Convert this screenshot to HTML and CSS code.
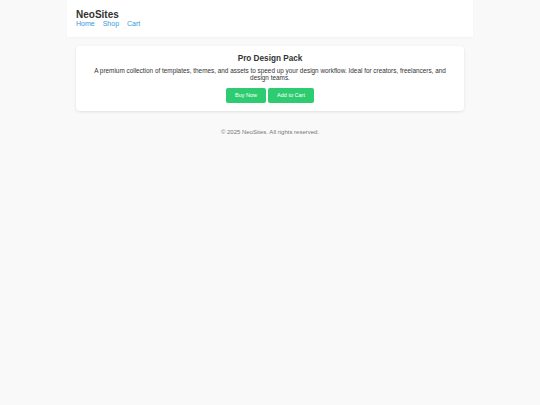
FILE: index.html
```html
<!DOCTYPE html>
<html>
<head>
<meta charset="utf-8">
<link rel="stylesheet" href="styles.css">
</head>
<body>
<div class="page">
  <header class="site-header">
    <div class="brand">NeoSites</div>
    <nav class="nav">
      <a href="#">Home</a>
      <a href="#">Shop</a>
      <a href="#">Cart</a>
    </nav>
  </header>
  <main class="main">
    <section class="card">
      <h2 class="card-title">Pro Design Pack</h2>
      <p class="card-text">A premium collection of templates, themes, and assets to speed up your design workflow. Ideal for creators, freelancers, and design teams.</p>
      <div class="actions">
        <button class="btn">Buy Now</button>
        <button class="btn">Add to Cart</button>
      </div>
    </section>
  </main>
  <footer class="footer">© 2025 NeoSites. All rights reserved.</footer>
</div>
</body>
</html>
```
FILE: styles.css
```css
html, body {
  margin: 0;
  padding: 0;
  background: #f9f9f9;
  font-family: "Liberation Sans", Arial, sans-serif;
  color: #333;
}
.page {
  max-width: 406px;
  margin: 0 auto;
}
.site-header {
  background: #fff;
  padding: 9px 9px 9.5px;
  box-shadow: 0 1px 2px rgba(0,0,0,0.03);
}
.brand {
  font-size: 10px;
  font-weight: bold;
  color: #333;
}
.nav {
  display: flex;
  gap: 8px;
  font-size: 7px;
}
.nav a {
  color: #3498db;
  text-decoration: none;
}
.main {
  padding: 9px;
}
.card {
  background: #fff;
  border-radius: 4px;
  box-shadow: 0 1px 3px rgba(0,0,0,0.1);
  padding: 8px 9px 8px;
  text-align: center;
}
.card-title {
  margin: 0 0 4.3px;
  font-size: 8.2px;
  color: #333;
}
.card-text {
  margin: 0 0 6.5px;
  font-size: 6.4px;
  line-height: 7.3px;
  color: #333;
}
.actions {
  display: flex;
  justify-content: center;
  gap: 2px;
}
.btn {
  background: #2ecc71;
  color: #fff;
  border: none;
  border-radius: 2px;
  font-family: inherit;
  font-size: 5.5px;
  height: 15px;
  padding: 0 9px;
  line-height: 15px;
}
.footer {
  text-align: center;
  font-size: 6px;
  color: #777;
  padding: 9px 0;
}
```
